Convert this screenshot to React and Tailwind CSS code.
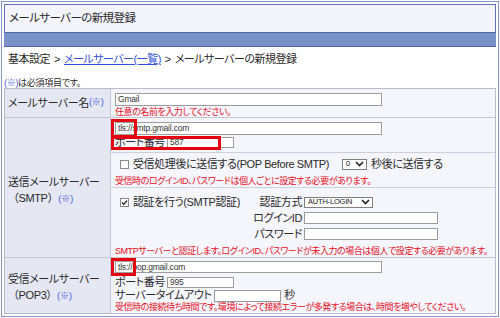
const Field = ({ className = "", children }) => (
  <div
    className={`border border-[#9c9c9c] bg-white flex items-center pl-[2px] text-[8.5px] tracking-[-0.2px] leading-none text-[#333] ${className}`}
  >
    {children}
  </div>
);

const Chevron = () => (
  <svg width="9" height="6" viewBox="0 0 9 6">
    <path d="M1 1l3.5 3.5L8 1" fill="none" stroke="#222" strokeWidth="1.6" />
  </svg>
);

const Select = ({ className = "", children }) => (
  <div
    className={`h-[11px] border border-[#7f7f7f] bg-white flex items-center justify-between pl-[3px] pr-[2px] text-[7.5px] tracking-[-0.2px] leading-none text-[#222] ${className}`}
  >
    <span>{children}</span>
    <Chevron />
  </div>
);

const Check = ({ checked }) => (
  <span className="w-[9px] h-[9px] border border-[#8a8a8a] bg-white flex items-center justify-center shrink-0">
    {checked && (
      <svg width="7" height="7" viewBox="0 0 7 7">
        <path d="M1 3.5l1.8 1.8L6 1.5" fill="none" stroke="#222" strokeWidth="1.3" />
      </svg>
    )}
  </span>
);

const Req = () => <span className="text-[#4452e8] text-[9px] tracking-normal">(※)</span>;

const Note = ({ className = "", children }) => (
  <div className={`text-[9px] tracking-[-0.45px] leading-[10px] text-[#e8101c] whitespace-nowrap ${className}`}>
    {children}
  </div>
);

const Mark = ({ className = "" }) => (
  <div className={`absolute border-[3px] border-[#e60012] ${className}`}></div>
);

export default function App() {
  return (
    <div className="w-[500px] h-[318px] bg-white pt-px px-px font-['Liberation_Sans','Noto_Sans_CJK_JP',sans-serif] [font-feature-settings:'palt'] text-[#2a2a2a]">
      <div className="h-[316px] border border-[#8596c8] p-[2px] flex flex-col">
        {/* title */}
        <div className="h-[28px] border-t border-x border-[#5f74b4] bg-[#f4f4fc] flex items-center pl-[4px] text-[11.5px] tracking-[-0.6px]">
          メールサーバーの新規登録
        </div>
        <div className="h-[15px] bg-[#7891c6] border-y border-[#4e64a8]"></div>

        {/* breadcrumb */}
        <div className="h-[25px] flex items-center pl-[4px] text-[11px] tracking-[-0.5px] gap-[4px] whitespace-nowrap">
          <span>基本設定</span>
          <span>&gt;</span>
          <span className="text-[#3350d8] underline">メールサーバー(一覧)</span>
          <span>&gt;</span>
          <span>メールサーバーの新規登録</span>
        </div>
        <div className="h-[16px] pt-[6px] text-[9px] tracking-[-0.3px] leading-[10px]">
          <span className="text-[#4452e8]">(※)</span>は必須項目です。
        </div>

        {/* table */}
        <div className="border border-[#b9bcc9] flex flex-col text-[11px] tracking-[-0.4px]">
          {/* row 1 */}
          <div className="h-[29px] flex border-b border-[#c4c6d2]">
            <div className="w-[106px] bg-[#e5e8f3] border-r border-[#c4c6d2] flex items-center pl-[3px] whitespace-nowrap">
              メールサーバー名<Req />
            </div>
            <div className="flex-1 bg-[#f5f5fc] pl-[4px] pt-[4px]">
              <Field className="w-[267px] h-[13px]">Gmail</Field>
              <Note className="mt-[1px]">任意の名前を入力してください。</Note>
            </div>
          </div>

          {/* row 2 smtp */}
          <div className="h-[140px] flex border-b border-[#c4c6d2]">
            <div className="w-[106px] bg-[#e5e8f3] border-r border-[#c4c6d2] flex flex-col justify-center pl-[3px] pt-[5px] leading-[16px] whitespace-nowrap">
              <span>送信メールサーバー</span>
              <span>
                <span className="[font-feature-settings:normal]">（SMTP）</span>
                <Req />
              </span>
            </div>
            <div className="flex-1 bg-[#f5f5fc] flex flex-col relative">
              <div className="h-[35px] border-b border-[#cdd0da] pl-[4px] pt-[4px]">
                <Field className="w-[267px] h-[13px]">tls://smtp.gmail.com</Field>
                <div className="h-[13px] mt-px flex items-center gap-[2px]">
                  <span>ポート番号</span>
                  <Field className="w-[67px] h-[11px]">587</Field>
                </div>
              </div>
              <div className="h-[35px] border-b border-[#cdd0da] pl-[4px] pt-[3px]">
                <div className="h-[16px] flex items-center whitespace-nowrap">
                  <span className="ml-[5px] mr-[4px]">
                    <Check />
                  </span>
                  <span>受信処理後に送信する(POP Before SMTP)</span>
                  <Select className="w-[25px] ml-[13px] mr-[4px]">0</Select>
                  <span>秒後に送信する</span>
                </div>
                <Note className="mt-[4px]">
                  受信時のログインID、パスワードは個人ごとに設定する必要があります。
                </Note>
              </div>
              <div className="flex-1 pl-[4px] pt-[8px]">
                <div className="flex">
                  <div className="w-[137px] h-[12px] flex items-center whitespace-nowrap">
                    <span className="ml-[5px] mr-[4px]">
                      <Check checked />
                    </span>
                    <span>認証を行う(SMTP認証)</span>
                  </div>
                  <div className="grid grid-cols-[50px_auto] gap-x-[2px] gap-y-[4px] items-center">
                    <span className="text-right leading-[12px] whitespace-nowrap">認証方式</span>
                    <Select className="w-[69px]">AUTH-LOGIN</Select>
                    <span className="text-right leading-[12px] whitespace-nowrap">ログインID</span>
                    <Field className="w-[134px] h-[12px]"></Field>
                    <span className="text-right leading-[12px] whitespace-nowrap">パスワード</span>
                    <Field className="w-[134px] h-[12px]"></Field>
                  </div>
                </div>
                <Note className="mt-[6px]">
                  SMTPサーバーと認証します。ログインID、パスワードが未入力の場合は個人で設定する必要があります。
                </Note>
              </div>
              <Mark className="left-0 top-px w-[26px] h-[19px]" />
              <Mark className="left-0 top-[18px] w-[110px] h-[14px]" />
            </div>
          </div>

          {/* row 3 pop3 */}
          <div className="h-[55px] flex">
            <div className="w-[106px] bg-[#e5e8f3] border-r border-[#c4c6d2] flex flex-col justify-center pl-[3px] pt-[3px] leading-[16px] whitespace-nowrap">
              <span>受信メールサーバー</span>
              <span>
                <span className="[font-feature-settings:normal]">（POP3）</span>
                <Req />
              </span>
            </div>
            <div className="flex-1 bg-[#f5f5fc] pl-[4px] pt-[3px] relative">
              <Field className="w-[267px] h-[12px]">tls://pop.gmail.com</Field>
              <div className="h-[13px] mt-[3px] flex items-center gap-[2px]">
                <span>ポート番号</span>
                <Field className="w-[67px] h-[11px]">995</Field>
              </div>
              <div className="h-[13px] flex items-center gap-[3px]">
                <span>サーバータイムアウト</span>
                <Field className="w-[67px] h-[12px]"></Field>
                <span>秒</span>
              </div>
              <Note>
                受信時の接続待ち時間です。環境によって接続エラーが多発する場合は、時間を増やしてください。
              </Note>
              <Mark className="left-0 top-0 w-[25px] h-[18px]" />
            </div>
          </div>
        </div>
      </div>
    </div>
  );
}
